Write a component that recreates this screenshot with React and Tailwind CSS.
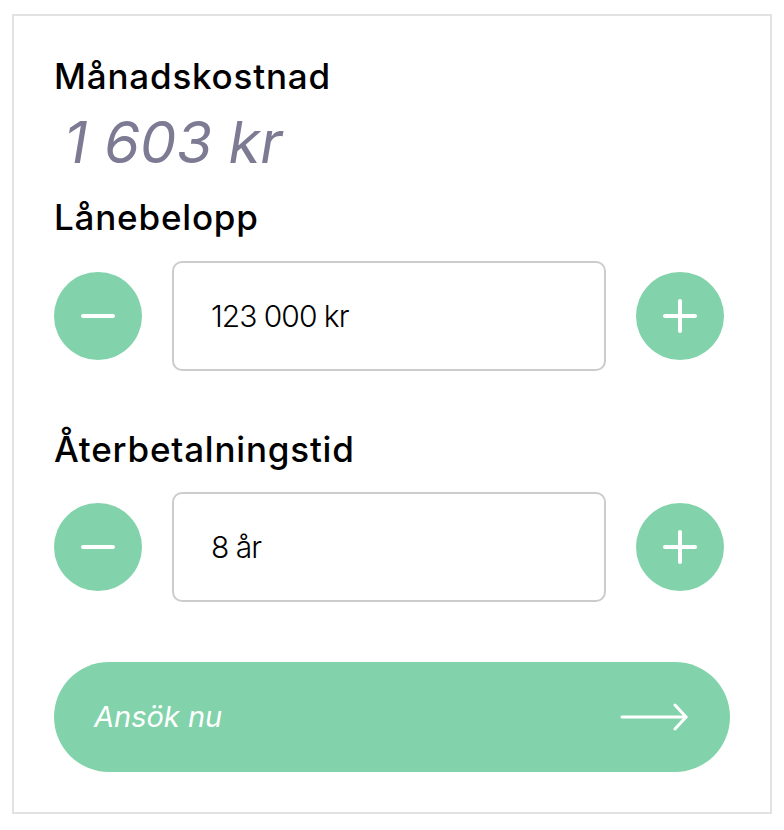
import { useState } from 'react'

const font = { fontFamily: 'Inter, "Noto Sans", "Liberation Sans", sans-serif' }

function Stepper({ value, onMinus, onPlus }) {
  return (
    <div className="flex items-center w-[670px]">
      <button
        onClick={onMinus}
        className="w-[88px] h-[88px] rounded-full bg-[#82d3ab] flex items-center justify-center shrink-0"
      >
        <span className="block w-[34px] h-[4px] rounded-full bg-white" />
      </button>
      <div className="mx-[30px] w-[434px] h-[110px] rounded-[10px] border-2 border-[#cccccc] flex items-center pl-[37px] text-[30px] font-light tracking-[-1px] text-black">
        {value}
      </div>
      <button
        onClick={onPlus}
        className="w-[88px] h-[88px] rounded-full bg-[#82d3ab] flex items-center justify-center shrink-0 relative"
      >
        <span className="block w-[34px] h-[4px] rounded-full bg-white" />
        <span className="absolute block w-[4px] h-[34px] rounded-full bg-white" />
      </button>
    </div>
  )
}

export default function App() {
  const [amount, setAmount] = useState(123000)
  const [years, setYears] = useState(8)

  const fmt = (n) => n.toLocaleString('sv-SE').replace(/\u00a0/g, ' ')

  return (
    <div className="w-[784px] h-[830px] bg-white pt-[14px] pl-[12px]" style={font}>
      <div className="w-[760px] h-[800px] border-2 border-[#e2e2e2] px-[40px] pt-[38px]">
        <h2 className="text-[35px] font-medium leading-[44px] tracking-[0.8px] text-black">Månadskostnad</h2>
        <div className="mt-[12px] pl-[10px] text-[58px] italic leading-[64px] text-[#7d7b93]">1 603 kr</div>
        <h2 className="mt-[21px] text-[35px] font-medium leading-[44px] tracking-[0.8px] text-black">Lånebelopp</h2>
        <div className="mt-[22px]">
          <Stepper
            value={`${fmt(amount)} kr`}
            onMinus={() => setAmount((a) => Math.max(0, a - 1000))}
            onPlus={() => setAmount((a) => a + 1000)}
          />
        </div>
        <h2 className="mt-[56px] text-[35px] font-medium leading-[44px] tracking-[0.8px] text-black">Återbetalningstid</h2>
        <div className="mt-[21px]">
          <Stepper
            value={`${years} år`}
            onMinus={() => setYears((y) => Math.max(1, y - 1))}
            onPlus={() => setYears((y) => y + 1)}
          />
        </div>
        <button className="mt-[60px] w-[676px] h-[110px] rounded-full bg-[#82d3ab] flex items-center justify-between pl-[40px] pr-[40px]">
          <span className="text-[29px] italic text-white">Ansök nu</span>
          <svg width="70" height="28" viewBox="0 0 70 28" fill="none" stroke="white" strokeWidth="3" strokeLinecap="round" strokeLinejoin="round">
            <path d="M2 14h64" />
            <path d="M55 2l11 12-11 12" />
          </svg>
        </button>
      </div>
    </div>
  )
}
